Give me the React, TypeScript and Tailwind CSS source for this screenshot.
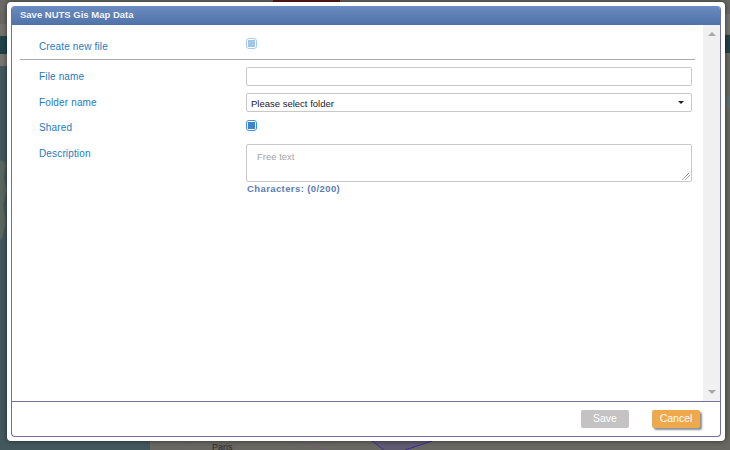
const LABEL = "w-[234px] pl-[27px] shrink-0 text-[10px] leading-[13px] tracking-[0.15px] text-[#1f7ab8]";

function Backdrop() {
	return (
		<svg className="absolute inset-0" width="730" height="450" viewBox="0 0 730 450">
			<rect width="730" height="450" fill="#686762" />
			<rect width="150" height="384" y="66" fill="#43585c" />
			<rect width="7" height="12" y="0" fill="#6a6a66" />
			<rect width="7" height="12" y="24" fill="#73716b" />
			<rect width="7" height="18" y="36" fill="#1f4348" />
			<rect width="7" height="12" y="54" fill="#777570" />
			<rect x="725" y="35" width="5" height="18" fill="#1f4348" />
			<rect x="725" y="14" width="5" height="20" fill="#74736d" />
			<rect x="725" y="96" width="5" height="12" fill="#5d6f70" />
			<rect x="273" y="0" width="67" height="2" fill="#5a1a1a" />
			<path d="M0 160 L6 163 L4 178 L7 190 L3 205 L6 222 L2 238 L0 240 Z" fill="#59655f" />
			<path d="M372 441 L432 441 L405 450 L384 450 Z" fill="#5f5a70" />
			<path d="M372 441 L384 450 M405 450 L432 441" stroke="#3b2d9c" fill="none" />
			<path d="M300 441 L325 450 M175 441 L182 450" stroke="#6f5f78" fill="none" />
			<text x="212" y="449.5" fontSize="9" fontFamily="'Liberation Sans', sans-serif" fill="#2c2c2c">Paris</text>
		</svg>
	);
}

function FakeCheckbox({ faded }: { faded?: boolean }) {
	return (
		<span
			className={
				faded
					? "flex h-[11px] w-[11px] items-center justify-center rounded-[3px] border border-[#a6cbe9] bg-white"
					: "flex h-[11px] w-[11px] items-center justify-center rounded-[3px] border border-[#3d93dc] bg-white"
			}
		>
			<span className={faded ? "h-[7px] w-[7px] bg-[#a4c5e6]" : "h-[7px] w-[7px] bg-[#4283c2]"} />
		</span>
	);
}

export default function App() {
	return (
		<div
			className="relative h-[450px] w-[730px] overflow-hidden"
			style={{ fontFamily: "'Liberation Sans', Arial, sans-serif" }}
		>
			<Backdrop />
			<div className="relative ml-[7px] mt-[2px] h-[439px] w-[718px] rounded-[4px] bg-white p-[4px] shadow-[0_0_5px_rgba(0,0,0,0.55)]">
				<div className="flex h-[431px] w-[710px] flex-col overflow-hidden rounded-[4px] border border-[#6f6f9b] border-t-0">
					<div className="flex h-[19px] shrink-0 items-center bg-gradient-to-b from-[#6b8cc0] to-[#4f72a8] pl-[8px] text-[9.5px] font-bold text-[#f0f3f8]">
						Save NUTS Gis Map Data
					</div>

					<div className="flex min-h-0 flex-1">
						<div className="min-w-0 flex-1">
							<div className="mx-[8px] flex h-[35px] items-start border-b border-[#aaaaaa] pt-[15px]">
								<div className="w-[226px] shrink-0 pl-[19px] text-[10px] leading-[13px] tracking-[0.15px] text-[#1f7ab8]">
									Create new file
								</div>
								<div className="-mt-[2px]">
									<FakeCheckbox faded />
								</div>
							</div>

							<div className="mt-[7px] flex items-start">
								<div className={`${LABEL} pt-[3px]`}>File name</div>
								<div className="h-[19px] w-[446px] rounded-[2px] border border-[#c8c8c8] bg-white" />
							</div>

							<div className="mt-[7px] flex items-start">
								<div className={`${LABEL} pt-[3px]`}>Folder name</div>
								<div className="flex h-[19px] w-[446px] items-center justify-between rounded-[2px] border border-[#c8c8c8] bg-white pl-[4px] pr-[7px] text-[9.5px] text-[#1a1a2a]">
									<span className="pt-[3px]">Please select folder</span>
									<span className="h-0 w-0 border-x-[3px] border-t-[3px] border-x-transparent border-t-[#222222]" />
								</div>
							</div>

							<div className="mt-[8px] flex items-start">
								<div className={`${LABEL} pt-[1px]`}>Shared</div>
								<FakeCheckbox />
							</div>

							<div className="mt-[10px] flex items-start">
								<div className={`${LABEL} pt-[3px]`}>Description</div>
								<div className="w-[446px]">
									<div className="relative h-[38px] rounded-[2px] border border-[#c8c8c8] bg-white pl-[10px] pt-[6px] text-[9.5px] leading-[12px] text-[#a5a5a5]">
										Free text
										<svg className="absolute bottom-0 right-0" width="10" height="10" viewBox="0 0 10 10">
											<path d="M1.5 8.5 L8.5 1.5 M4.5 8.5 L8.5 4.5" stroke="#555555" strokeDasharray="1 0.6" />
										</svg>
									</div>
									<div className="mt-[1px] pl-[1px] text-[9.5px] font-bold leading-[12px] tracking-[0.4px] text-[#5b7db1]">
										Characters: (0/200)
									</div>
								</div>
							</div>
						</div>

						<div className="flex w-[17px] shrink-0 flex-col items-center justify-between bg-[#f0f0f0] py-[7px]">
							<span className="h-0 w-0 border-x-[4px] border-b-[4px] border-x-transparent border-b-[#a8a8a8]" />
							<span className="h-0 w-0 border-x-[4px] border-t-[4px] border-x-transparent border-t-[#a8a8a8]" />
						</div>
					</div>

					<div className="flex h-[35px] shrink-0 items-start justify-end gap-[23px] border-t border-[#6f6f9b] pr-[20px] pt-[8px]">
						<button className="h-[18px] w-[48px] rounded-[2px] bg-[#c4c2c2] text-[10.5px] text-white">Save</button>
						<button className="h-[18px] w-[48px] rounded-[2px] bg-[#eda94c] text-[10.5px] text-white shadow-[2px_2px_2px_#8a8f98]">Cancel</button>
					</div>
				</div>
			</div>
		</div>
	);
}
